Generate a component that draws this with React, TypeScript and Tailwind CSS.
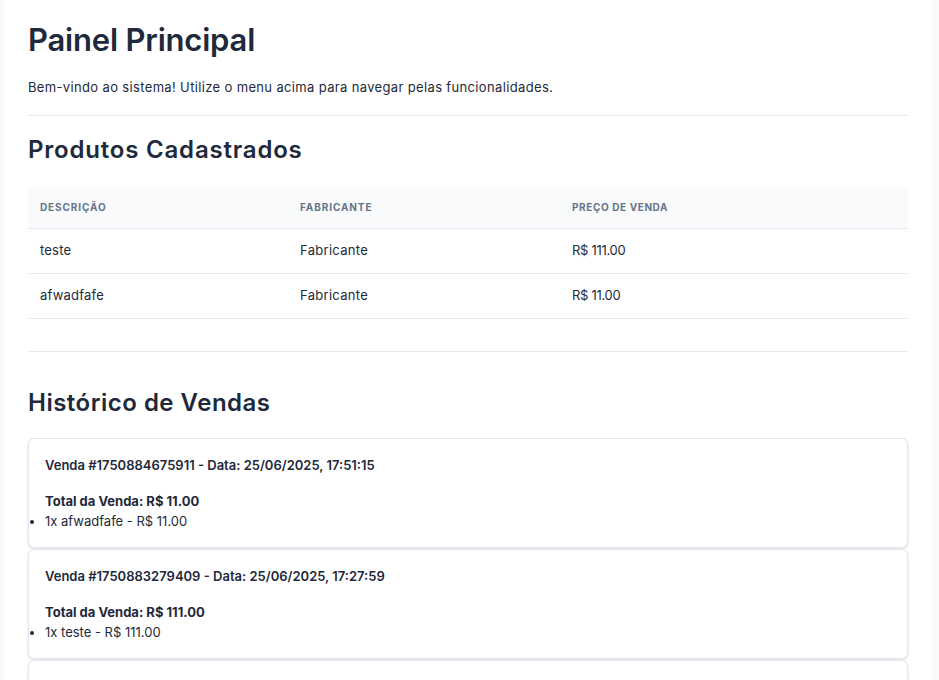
const produtos = [
  { descricao: 'teste', fabricante: 'Fabricante', preco: 'R$ 111.00' },
  { descricao: 'afwadfafe', fabricante: 'Fabricante', preco: 'R$ 11.00' },
];

const vendas = [
  {
    id: '1750884675911',
    data: '25/06/2025, 17:51:15',
    total: 'R$ 11.00',
    itens: ['1x afwadfafe - R$ 11.00'],
  },
  {
    id: '1750883279409',
    data: '25/06/2025, 17:27:59',
    total: 'R$ 111.00',
    itens: ['1x teste - R$ 111.00'],
  },
  {
    id: '1750882011734',
    data: '25/06/2025, 17:06:51',
    total: 'R$ 111.00',
    itens: ['1x teste - R$ 111.00'],
  },
];

export default function App() {
  return (
    <div className="min-h-screen bg-[#f8fafc] font-['Inter',sans-serif] text-[#1e293b]">
      <div className="ml-1 min-h-screen w-[928px] bg-white px-6 pt-5 pb-10">
        <h1 className="text-[31px] font-semibold leading-[40px] tracking-[-0.2px]">Painel Principal</h1>
        <p className="mt-[17px] text-[13px] leading-5 tracking-[0.35px]">
          Bem-vindo ao sistema! Utilize o menu acima para navegar pelas funcionalidades.
        </p>
        <hr className="mt-[18px] border-[#e5e7eb]" />

        <h2 className="mt-[18px] text-2xl font-semibold leading-8 tracking-[0.8px]">Produtos Cadastrados</h2>
        <table className="mt-[21px] w-full border-collapse text-left">
          <thead>
            <tr className="border-b border-[#e2e8f0] bg-[#f8fafc]">
              <th className="h-[41px] w-[260px] px-3 text-[10px] font-bold uppercase tracking-[0.9px] text-[#64748b]">
                Descrição
              </th>
              <th className="w-[272px] px-3 text-[10px] font-bold uppercase tracking-[0.9px] text-[#64748b]">
                Fabricante
              </th>
              <th className="px-3 text-[10px] font-bold uppercase tracking-[0.6px] text-[#64748b]">
                Preço de Venda
              </th>
            </tr>
          </thead>
          <tbody>
            {produtos.map((p) => (
              <tr key={p.descricao} className="border-b border-[#e2e8f0]">
                <td className="h-[45px] px-3 text-[13px] tracking-[0.2px]">{p.descricao}</td>
                <td className="px-3 text-[13px] tracking-[0.3px]">{p.fabricante}</td>
                <td className="px-3 text-[13px] tracking-[-0.3px]">{p.preco}</td>
              </tr>
            ))}
          </tbody>
        </table>
        <hr className="mt-8 border-[#e5e7eb]" />

        <h2 className="mt-[35px] text-2xl font-semibold leading-8 tracking-[0.5px]">Histórico de Vendas</h2>
        <div className="mt-[19px] flex flex-col gap-px">
          {vendas.map((v) => (
            <div key={v.id} className="rounded-md border border-[#e2e8f0] bg-white p-4 shadow-sm">
              <h3 className="text-[13px] font-semibold leading-5">
                Venda #{v.id} - Data: {v.data}
              </h3>
              <p className="mt-4 text-[13px] font-bold leading-5">Total da Venda: {v.total}</p>
              <ul className="list-disc">
                {v.itens.map((item) => (
                  <li key={item} className="text-[13px] leading-5">
                    {item}
                  </li>
                ))}
              </ul>
            </div>
          ))}
        </div>
      </div>
    </div>
  );
}
